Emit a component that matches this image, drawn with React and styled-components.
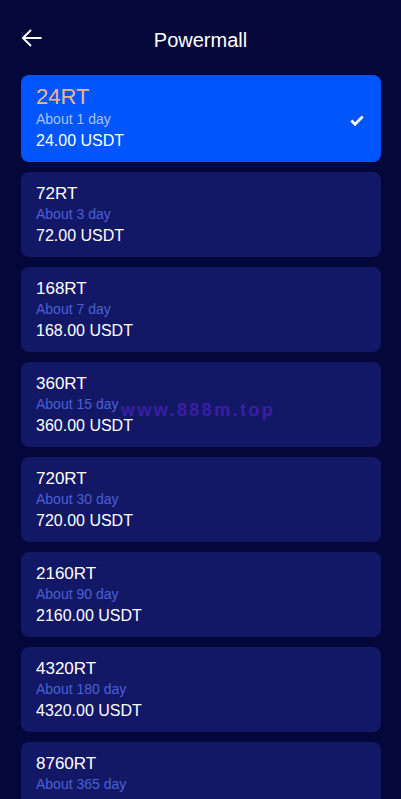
import React from "react";
import styled, { createGlobalStyle } from "styled-components";

const Global = createGlobalStyle`
  html, body { margin: 0; padding: 0; background: #04073a; }
  body { font-family: "Liberation Sans", Arial, sans-serif; }
  * { box-sizing: border-box; }
`;

const Page = styled.div`
  position: relative;
  width: 401px;
  height: 799px;
  background: #04073a;
  color: #fff;
  overflow: hidden;
`;

const Header = styled.header`
  position: relative;
  height: 50px;
  margin-top: 15px;
  display: flex;
  align-items: center;
  justify-content: center;
`;

const Back = styled.button`
  position: absolute;
  left: 21px;
  top: 14px;
  width: 22px;
  height: 18px;
  padding: 0;
  border: 0;
  background: none;
  display: flex;
`;

const Title = styled.h1`
  margin: 0;
  font-size: 20px;
  font-weight: 400;
  color: #fff;
  line-height: 24px;
`;

const List = styled.div`
  display: flex;
  flex-direction: column;
  gap: 10px;
  padding: 10px 20px 0 21px;
`;

const Card = styled.div`
  position: relative;
  width: 360px;
  border-radius: 8px;
  background: ${(p) => (p.$active ? "#0155fd" : "#131866")};
  padding: ${(p) => (p.$active ? "10px 15px 11px" : "11px 15px")};
  display: flex;
  flex-direction: column;
`;

const Name = styled.div`
  font-size: ${(p) => (p.$active ? "22px" : "17px")};
  line-height: ${(p) => (p.$active ? "24px" : "21px")};
  color: ${(p) => (p.$active ? "#f1b48a" : "#ffffff")};
`;

const Days = styled.div`
  font-size: 14px;
  line-height: 21px;
  color: ${(p) => (p.$active ? "#a9c0ff" : "#4c5fd6")};
`;

const Price = styled.div`
  font-size: 16px;
  line-height: 21px;
  color: #fff;
`;

const Check = styled.svg`
  position: absolute;
  right: 17px;
  top: 50%;
  margin-top: -4px;
`;

const Watermark = styled.div`
  position: absolute;
  left: 121px;
  top: 400px;
  font-size: 18px;
  font-weight: 700;
  letter-spacing: 2.4px;
  color: #3a1ea2;
  pointer-events: none;
  white-space: nowrap;
`;

const plans = [
  ["24RT", 1, "24.00"],
  ["72RT", 3, "72.00"],
  ["168RT", 7, "168.00"],
  ["360RT", 15, "360.00"],
  ["720RT", 30, "720.00"],
  ["2160RT", 90, "2160.00"],
  ["4320RT", 180, "4320.00"],
  ["8760RT", 365, "8760.00"],
];

export default function App() {
  return (
    <Page>
      <Global />
      <Header>
        <Back aria-label="back">
          <svg width="22" height="18" viewBox="0 0 22 18" fill="none">
            <path d="M20.5 9H2" stroke="#fff" strokeWidth="2" />
            <path d="M10 1L2 9l8 8" stroke="#fff" strokeWidth="2" />
          </svg>
        </Back>
        <Title>Powermall</Title>
      </Header>
      <List>
        {plans.map(([name, days, price], i) => (
          <Card key={name} $active={i === 0}>
            <Name $active={i === 0}>{name}</Name>
            <Days $active={i === 0}>About {days} day</Days>
            <Price>{price} USDT</Price>
            {i === 0 && (
              <Check width="14" height="11" viewBox="0 0 14 11" fill="none">
                <path d="M1.3 5.6L5 9.2 12.7 1.5" stroke="#fff" strokeWidth="2.8" />
              </Check>
            )}
          </Card>
        ))}
      </List>
      <Watermark>www.888m.top</Watermark>
    </Page>
  );
}
